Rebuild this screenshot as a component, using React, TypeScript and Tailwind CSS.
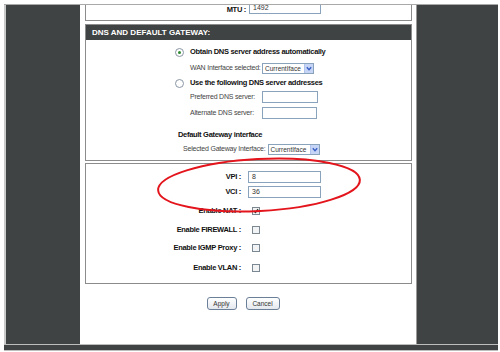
import React from "react";

const F = "'Liberation Sans',Arial,sans-serif";

function TextInput({ value = "", w = 56 }: { value?: string; w?: number }) {
  return (
    <div
      className="h-[12px] border border-[#8aa3bd] bg-white text-[7px] leading-[10px] pl-[3px] text-[#333] shrink-0"
      style={{ width: w }}
    >
      {value}
    </div>
  );
}

function Select({ w = 52 }: { w?: number }) {
  return (
    <div className="h-[11px] border border-[#8aa3bd] bg-white flex items-stretch shrink-0" style={{ width: w }}>
      <div className="flex-1 text-[6.5px] leading-[9px] pl-[2px] text-[#333] whitespace-nowrap overflow-hidden">CurrentIface</div>
      <div className="w-[9px] bg-[#c6d5f5] border-l border-[#b0c4ee] flex items-center justify-center">
        <svg width="6" height="5" viewBox="0 0 6 5">
          <path d="M0.8 1.2 L3 3.6 L5.2 1.2" stroke="#3a5fc4" strokeWidth="1.4" fill="none" />
        </svg>
      </div>
    </div>
  );
}

function Radio({ checked }: { checked?: boolean }) {
  return (
    <div className="w-[9px] h-[9px] rounded-full border border-[#8a96a3] bg-white flex items-center justify-center shrink-0">
      {checked && <div className="w-[3px] h-[3px] rounded-full bg-[#2f8a2f]" />}
    </div>
  );
}

function Check({ checked }: { checked?: boolean }) {
  return (
    <div className="w-[8px] h-[8px] border border-[#7b8791] bg-[#f1f3f5] flex items-center justify-center">
      {checked && (
        <svg width="6" height="6" viewBox="0 0 6 6">
          <path d="M1 3 L2.5 4.6 L5 1.2" stroke="#2a3a2a" strokeWidth="1.3" fill="none" />
        </svg>
      )}
    </div>
  );
}

function Row({ label, h, children }: { label: string; h: number; children: React.ReactNode }) {
  return (
    <div className="flex items-center" style={{ height: h }}>
      <div className="w-[155px] text-right font-bold text-[7.5px] tracking-[-0.3px] text-[#111] whitespace-nowrap">{label}</div>
      <div className="pl-[7px] flex items-center">{children}</div>
    </div>
  );
}

function Button({ children, w }: { children: React.ReactNode; w: number }) {
  return (
    <div
      className="h-[13px] rounded-[3px] border border-[#6b7f99] bg-gradient-to-b from-[#ffffff] to-[#e4e8ee] text-[6.5px] leading-[11px] text-center text-[#333]"
      style={{ width: w }}
    >
      {children}
    </div>
  );
}

const bold = "font-bold text-[7.5px] tracking-[-0.3px] text-[#111] whitespace-nowrap";
const small = "text-[7px] tracking-[-0.2px] text-[#444] whitespace-nowrap";

export default function App() {
  return (
    <div className="w-[500px] h-[352px] bg-white pt-[4px] pl-[4px] pr-[2px] relative overflow-hidden" style={{ fontFamily: F }}>
      <div className="border-t border-[#a9a9a9] flex h-[340px]">
        <div className="w-[2px] bg-[#c9c9c9]" />
        <div className="w-[74px] bg-[#3f4343]" />
        <div className="w-[336px] bg-white flex flex-col pl-[5px] pr-[4px] overflow-hidden">
          {/* MTU box (cut off at top) */}
          <div className="h-[16px] border-x border-b border-[#8c8c8c] flex items-start shrink-0">
            <div className={"w-[160px] text-right mt-[-1px] " + bold}>MTU :</div>
            <div className="pl-[3px] mt-[-3px]">
              <TextInput value="1492" w={72} />
            </div>
          </div>

          {/* DNS box */}
          <div className="mt-[3px] h-[137px] border border-[#8c8c8c] flex flex-col shrink-0">
            <div className="h-[15px] bg-[#3f4343] text-white font-bold text-[8px] leading-[15px] pl-[6px] whitespace-nowrap">
              DNS AND DEFAULT GATEWAY:
            </div>
            <div className="pl-[89px] flex flex-col">
              <div className="flex items-center h-[10px] gap-[6px] mt-[7px]">
                <Radio checked />
                <span className={bold}>Obtain DNS server address automatically</span>
              </div>
              <div className="flex items-center h-[10px] pl-[15px] gap-[2px] mt-[6px]">
                <span className={small + " w-[70px]"}>WAN Interface selected:</span>
                <Select />
              </div>
              <div className="flex items-center h-[10px] gap-[6px] mt-[5px]">
                <Radio />
                <span className={bold}>Use the following DNS server addresses</span>
              </div>
              <div className="flex items-center h-[10px] pl-[15px] mt-[4px]">
                <span className={small + " w-[72px]"}>Preferred DNS server:</span>
                <TextInput w={56} />
              </div>
              <div className="flex items-center h-[10px] pl-[15px] mt-[6px]">
                <span className={small + " w-[72px]"}>Alternate DNS server:</span>
                <TextInput w={55} />
              </div>
              <div className="flex items-center h-[10px] pl-[3px] mt-[12px]">
                <span className={bold}>Default Gateway interface</span>
              </div>
              <div className="flex items-center h-[10px] pl-[8px] gap-[2px] mt-[4px]">
                <span className={small}>Selected Gateway Interface:</span>
                <Select />
              </div>
            </div>
          </div>

          {/* VPI/VCI box */}
          <div className="mt-[2px] h-[121px] border border-[#8c8c8c] flex flex-col shrink-0">
            <div className="h-[6px]" />
            <Row label="VPI :" h={14}>
              <TextInput value="8" w={73} />
            </Row>
            <Row label="VCI :" h={16}>
              <TextInput value="36" w={73} />
            </Row>
            <Row label="Enable NAT :" h={22}>
              <div className="pl-[4px]"><Check checked /></div>
            </Row>
            <Row label="Enable FIREWALL :" h={16}>
              <div className="pl-[4px]"><Check /></div>
            </Row>
            <Row label="Enable IGMP Proxy :" h={20}>
              <div className="pl-[4px]"><Check /></div>
            </Row>
            <Row label="Enable VLAN :" h={20}>
              <div className="pl-[4px]"><Check /></div>
            </Row>
          </div>

          <div className="flex justify-center gap-[9px] mt-[13px] pr-[11px]">
            <Button w={30}>Apply</Button>
            <Button w={34}>Cancel</Button>
          </div>
        </div>
        <div className="w-[1px] bg-[#9a9a9a]" />
        <div className="w-[81px] bg-[#3f4343]" />
      </div>
      <div className="border-t border-[#bdbdbd] border-b h-[7px] bg-[#3f4343]" />

      {/* red annotation ellipse */}
      <svg className="absolute left-0 top-0 pointer-events-none" width="500" height="352">
        <ellipse cx="259" cy="185" rx="101" ry="26" transform="rotate(-3 259 185)" fill="none" stroke="#e3141b" strokeWidth="2" />
      </svg>
    </div>
  );
}
